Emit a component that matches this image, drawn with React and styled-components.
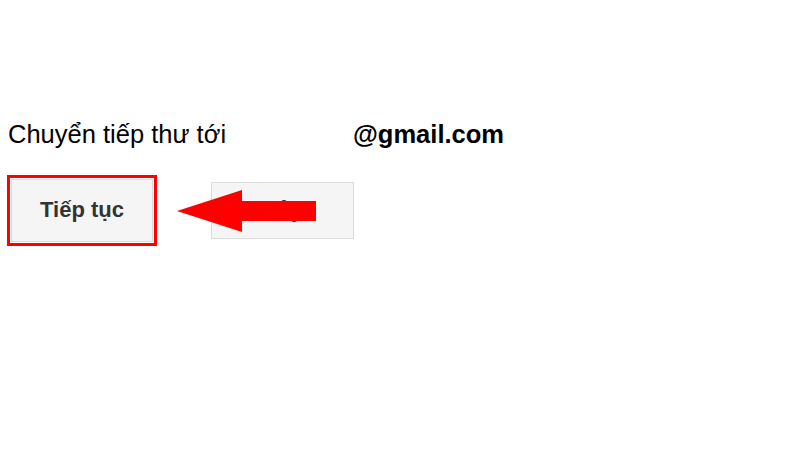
import React from 'react'
import styled, { createGlobalStyle } from 'styled-components'

const GlobalStyle = createGlobalStyle`
  html, body {
    margin: 0;
    padding: 0;
    background: #fff;
  }
  body {
    font-family: "Liberation Sans", Arial, sans-serif;
    color: #000;
  }
`

const Page = styled.main`
  width: 800px;
  height: 450px;
  padding: 119px 0 0 8px;
  box-sizing: border-box;
  display: flex;
  flex-direction: column;
  gap: 26px;
`

const ForwardLine = styled.div`
  display: flex;
  align-items: baseline;
  font-size: 25.5px;
  line-height: 30px;
`

const Label = styled.span`
  width: 345px;
`

const Address = styled.span`
  font-weight: bold;
`

const Actions = styled.div`
  position: relative;
  display: flex;
  align-items: center;
  gap: 54px;
  margin-left: -1px;
`

const Highlight = styled.div`
  border: 3px solid #f00;
  padding: 1px;
  display: flex;
`

const Button = styled.button`
  width: ${(p) => p.$w}px;
  height: ${(p) => p.$h}px;
  background: #f5f5f5;
  border: 1px solid #dcdcdc;
  font-family: "Liberation Sans", Arial, sans-serif;
  font-size: 22px;
  font-weight: bold;
  color: #333;
  padding: 0 0 2px;
`

const Arrow = styled.svg`
  position: absolute;
  left: 170px;
  top: 15px;
`

export default function App() {
  return (
    <>
      <GlobalStyle />
      <Page>
        <ForwardLine>
          <Label>Chuyển tiếp thư tới</Label>
          <Address>@gmail.com</Address>
        </ForwardLine>
        <Actions>
          <Highlight>
            <Button $w={142} $h={63}>Tiếp tục</Button>
          </Highlight>
          <Button $w={143} $h={57}>Hủy</Button>
          <Arrow width="140" height="43" viewBox="0 0 140 43">
            <polygon
              points="0,21 65,0 65,11 139,11 139,31 65,31 65,42"
              fill="#f00"
            />
          </Arrow>
        </Actions>
      </Page>
    </>
  )
}
